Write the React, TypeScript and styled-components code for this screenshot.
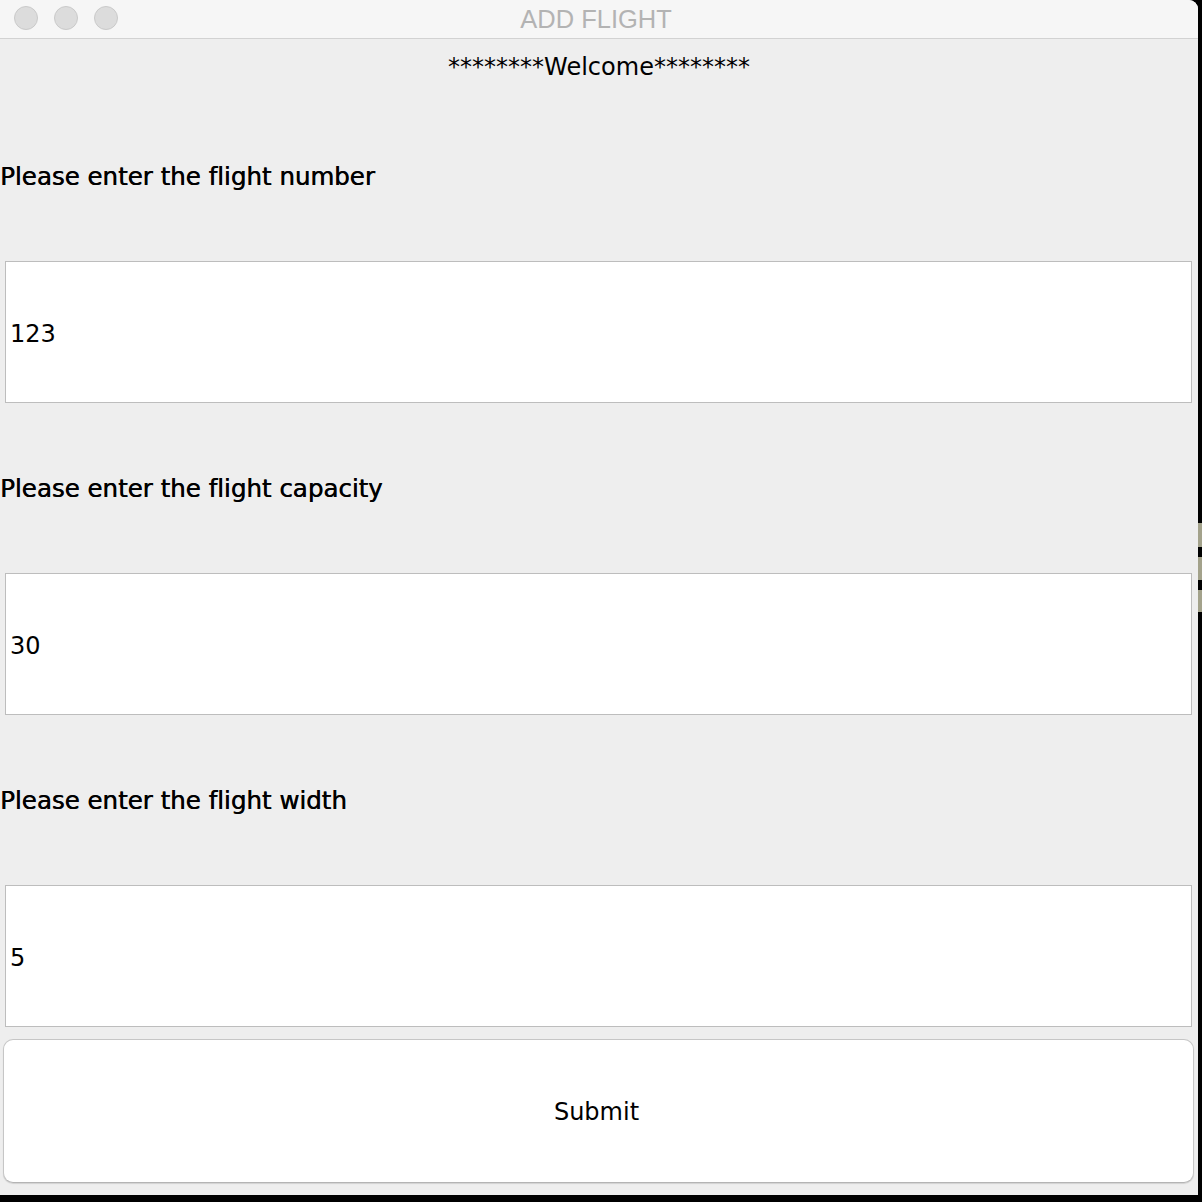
import React from "react";
import styled, { createGlobalStyle } from "styled-components";

const Global = createGlobalStyle`
  html, body { margin: 0; padding: 0; background: #000; }
  body { width: 1202px; height: 1202px; overflow: hidden; }
`;

const Desktop = styled.div`
  display: flex;
  width: 1202px;
  height: 1202px;
  background: #000;
`;

const Window = styled.div`
  width: 1198px;
  height: 1195px;
  display: flex;
  flex-direction: column;
  background: #eeeeee;
  border-top-right-radius: 9px;
  overflow: hidden;
  font-family: "DejaVu Sans", "Noto Sans", sans-serif;
  font-variant-ligatures: none;
  font-feature-settings: "liga" 0, "clig" 0, "dlig" 0;
`;

const Strip = styled.div`
  flex: 1;
  display: flex;
  flex-direction: column;
  padding-top: 523px;
  gap: 10px;
`;

const Patch = styled.div<{ $h: number }>`
  height: ${(p) => p.$h}px;
  background: #a3a28b;
`;

const TitleBar = styled.div`
  position: relative;
  height: 38px;
  flex: none;
  background: #f6f6f6;
  border-bottom: 1px solid #d2d2d2;
  display: flex;
  align-items: center;
  justify-content: center;
`;

const Lights = styled.div`
  position: absolute;
  left: 14px;
  top: 6px;
  display: flex;
  gap: 16px;
`;

const Light = styled.span`
  width: 22px;
  height: 22px;
  border-radius: 50%;
  background: #dcdcdc;
  border: 1px solid #cacaca;
`;

const Title = styled.div`
  font-family: "Liberation Sans", Arial, sans-serif;
  font-size: 25.5px;
  color: #b3b3b3;
  margin-left: -6px;
`;

const WelcomeRow = styled.div`
  height: 52px;
  flex: none;
  display: flex;
  align-items: center;
  justify-content: center;
  padding-top: 4px;
  box-sizing: border-box;
  font-size: 24px;
  color: #000;
`;

const LabelRow = styled.div`
  height: 170px;
  flex: none;
  display: flex;
  align-items: center;
  font-size: 24.5px;
  color: #000;
  text-shadow: 0.5px 0 0 #000;
`;

const Field = styled.div`
  flex: none;
  height: 142px;
  box-sizing: border-box;
  margin: 0 6px 0 5px;
  background: #fff;
  border: 1px solid #bdbdbd;
  display: flex;
  align-items: center;
  padding: 4px 0 0 4px;
  font-size: 24px;
  color: #000;
`;

const ButtonWrap = styled.div`
  padding: 12px 4px 0 3px;
`;

const SubmitButton = styled.div`
  height: 144px;
  box-sizing: border-box;
  background: #fff;
  border: 1px solid #c6c6c6;
  border-bottom-color: #b4b4b4;
  border-radius: 10px;
  box-shadow: 0 1px 1px rgba(0, 0, 0, 0.12);
  display: flex;
  align-items: center;
  justify-content: center;
  font-size: 24px;
  color: #000;
  padding: 2px 4px 0 0;
`;

const fields = [
  { label: "Please enter the flight number", value: "123" },
  { label: "Please enter the flight capacity", value: "30" },
  { label: "Please enter the flight width", value: "5" },
];

export default function App() {
  return (
    <>
      <Global />
      <Desktop>
        <Window>
          <TitleBar>
            <Lights>
              <Light />
              <Light />
              <Light />
            </Lights>
            <Title>ADD FLIGHT</Title>
          </TitleBar>
          <WelcomeRow>********Welcome********</WelcomeRow>
          {fields.map((f) => (
            <React.Fragment key={f.label}>
              <LabelRow>{f.label}</LabelRow>
              <Field>{f.value}</Field>
            </React.Fragment>
          ))}
          <ButtonWrap>
            <SubmitButton>Submit</SubmitButton>
          </ButtonWrap>
        </Window>
        <Strip>
          <Patch $h={24} />
          <Patch $h={23} />
          <Patch $h={22} />
        </Strip>
      </Desktop>
    </>
  );
}
